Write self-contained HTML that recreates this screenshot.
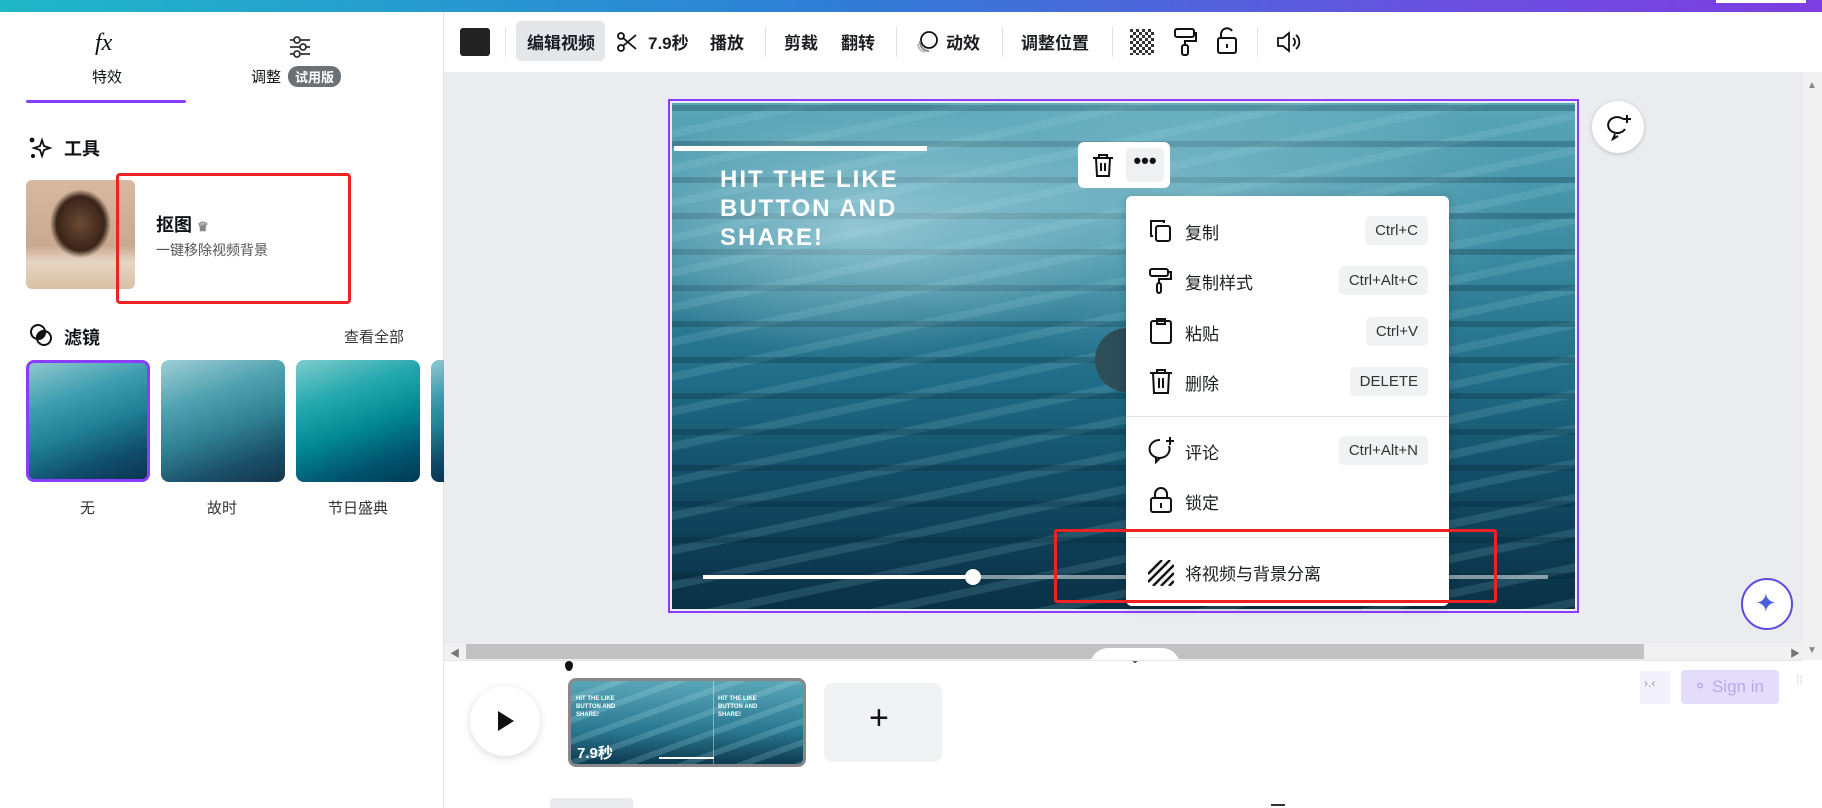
<!DOCTYPE html>
<html><head><meta charset="utf-8"><style>
*{margin:0;padding:0;box-sizing:border-box}
body{width:1822px;height:808px;overflow:hidden;background:#fff;font-family:"Liberation Sans","Noto Sans CJK SC",sans-serif;color:#0d1216;position:relative}
.a{position:absolute}
.tb{font-size:17px;font-weight:bold;color:#1a1d21;top:29px}
.sep{position:absolute;top:27px;width:1px;height:30px;background:#e0e2e6}
.mi{position:absolute;left:1185px;font-size:17px;color:#1a1d21}
.kb{position:absolute;right:394px;font-size:15px;color:#333;background:#f1f2f4;border-radius:5px;padding:6px 10px}
.ic{position:absolute;left:1148px}
.th{position:absolute;top:360px;width:124px;height:122px;border-radius:8px;background:linear-gradient(160deg,#8fc7cf 0%,#3f9fb0 30%,#1f7f94 55%,#0f4d6b 80%,#0b3550 100%)}
</style></head><body>
<div class="a" style="left:0;top:0;width:1822px;height:12px;background:linear-gradient(90deg,#1fb8c8,#2e7fd6 45%,#6a4fe0 80%,#7d3de0)"></div>
<div class="a" style="left:1716px;top:0;width:90px;height:3px;background:#fff"></div>
<div class="a" style="left:443px;top:12px;width:1px;height:796px;background:#e3e5e8"></div>
<div class="a" style="left:95px;top:30px;font-size:24px;font-style:italic;font-family:'Liberation Serif',serif">fx</div>
<div class="a" style="left:92px;top:66px;font-size:15px">特效</div>
<div class="a" style="left:26px;top:100px;width:160px;height:3px;background:#8b3dff;border-radius:2px"></div>
<svg class="a" style="left:287px;top:34px" width="26" height="26" viewBox="0 0 26 26" fill="none" stroke="#333" stroke-width="1.8"><path d="M3 6h20M3 13h20M3 20h20"/><circle cx="10" cy="6" r="3" fill="#fff"/><circle cx="16" cy="13" r="3" fill="#fff"/><circle cx="10" cy="20" r="3" fill="#fff"/></svg>
<div class="a" style="left:251px;top:66px;font-size:15px">调整</div>
<div class="a" style="left:288px;top:66px;font-size:13px;font-weight:bold;color:#fff;background:#6b6f76;border-radius:10px;padding:1px 7px">试用版</div>
<svg class="a" style="left:28px;top:136px" width="24" height="24" viewBox="0 0 24 24" fill="none" stroke="#111" stroke-width="1.8"><path d="M14 4l2 6 6 2-6 2-2 6-2-6-6-2 6-2z"/><circle cx="4" cy="4" r="1.5" fill="#111"/><circle cx="5" cy="20" r="1.2" fill="#111"/></svg>
<div class="a" style="left:64px;top:135px;font-size:18px;font-weight:bold">工具</div>
<div class="a" style="left:26px;top:180px;width:109px;height:109px;border-radius:6px;background:radial-gradient(ellipse 40% 45% at 50% 40%,#6b4a35 0,#3a2418 55%,transparent 70%),linear-gradient(180deg,#d8b9a0,#c9a98e 60%,#e6d6c4 75%,#d7c0a5)"></div>
<div class="a" style="left:116px;top:173px;width:235px;height:131px;border:3px solid #ee2222;border-radius:4px"></div>
<div class="a" style="left:156px;top:211px;font-size:18px;font-weight:bold">抠图 <span style="font-size:13px;color:#888">♛</span></div>
<div class="a" style="left:156px;top:240px;font-size:14px;color:#555">一键移除视频背景</div>
<svg class="a" style="left:28px;top:322px" width="26" height="26" viewBox="0 0 26 26" fill="none" stroke="#111" stroke-width="2"><circle cx="10" cy="10" r="7"/><circle cx="16" cy="16" r="7"/><path d="M9 17a7 7 0 0 1 8-8 7 7 0 0 1-8 8z" fill="#111"/></svg>
<div class="a" style="left:64px;top:324px;font-size:18px;font-weight:bold">滤镜</div>
<div class="a" style="left:344px;top:326px;font-size:15px;color:#333">查看全部</div>
<div class="th" style="left:26px;border:3px solid #8b3dff"></div>
<div class="th" style="left:161px;filter:saturate(.8) brightness(1.05)"></div>
<div class="th" style="left:296px;filter:saturate(1.3) hue-rotate(-8deg)"></div>
<div class="th" style="left:431px;width:13px;border-radius:8px 0 0 8px"></div>
<div class="a" style="left:80px;top:497px;font-size:15px;color:#333">无</div>
<div class="a" style="left:207px;top:497px;font-size:15px;color:#333">故时</div>
<div class="a" style="left:328px;top:497px;font-size:15px;color:#333">节日盛典</div>
<div class="a" style="left:460px;top:28px;width:30px;height:28px;background:#222;border-radius:3px"></div>
<div class="sep" style="left:505px"></div>
<div class="a" style="left:516px;top:21px;width:89px;height:40px;background:#e4e6ea;border-radius:5px"></div>
<div class="a tb" style="left:527px">编辑视频</div>
<svg class="a" style="left:615px;top:30px" width="24" height="24" viewBox="0 0 24 24" fill="none" stroke="#111" stroke-width="1.8"><circle cx="6" cy="6" r="3"/><circle cx="6" cy="18" r="3"/><path d="M8 8l13 11M8 16L21 5"/></svg>
<div class="a tb" style="left:648px">7.9秒</div>
<div class="a tb" style="left:710px">播放</div>
<div class="sep" style="left:765px"></div>
<div class="a tb" style="left:784px">剪裁</div>
<div class="a tb" style="left:841px">翻转</div>
<div class="sep" style="left:896px"></div>
<svg class="a" style="left:914px;top:29px" width="26" height="26" viewBox="0 0 26 26" fill="none" stroke="#111" stroke-width="1.8"><circle cx="15" cy="11" r="8"/><path d="M6 12a9 9 0 0 0 9 10" stroke="#888"/><path d="M4 15a8 8 0 0 0 7 8" stroke="#bbb"/></svg>
<div class="a tb" style="left:946px">动效</div>
<div class="sep" style="left:1002px"></div>
<div class="a tb" style="left:1021px">调整位置</div>
<div class="sep" style="left:1112px"></div>
<svg class="a" style="left:1130px;top:29px" width="24" height="26"><defs><pattern id="ck" width="6" height="6" patternUnits="userSpaceOnUse"><rect width="3" height="3" fill="#333"/><rect x="3" y="3" width="3" height="3" fill="#333"/></pattern></defs><rect width="24" height="26" fill="url(#ck)"/></svg>
<svg class="a" style="left:1172px;top:27px" width="26" height="30" viewBox="0 0 26 30" fill="none" stroke="#111" stroke-width="2"><rect x="3" y="2" width="19" height="8" rx="2"/><path d="M22 6h2v8H13v4"/><rect x="10" y="18" width="6" height="10" rx="2"/></svg>
<svg class="a" style="left:1215px;top:26px" width="24" height="30" viewBox="0 0 24 30" fill="none" stroke="#111" stroke-width="2"><path d="M6 12V8a6 6 0 0 1 11-3"/><rect x="3" y="12" width="18" height="15" rx="2"/><path d="M12 18v4"/></svg>
<div class="sep" style="left:1257px"></div>
<svg class="a" style="left:1275px;top:29px" width="26" height="26" viewBox="0 0 26 26" fill="none" stroke="#111" stroke-width="1.8"><path d="M3 9h5l6-5v18l-6-5H3z"/><path d="M18 9a5 5 0 0 1 0 8M21 6a9 9 0 0 1 0 14"/></svg>
<div class="a" style="left:444px;top:72px;width:1359px;height:571px;background:#ebecf0"></div>
<div class="a" style="left:1803px;top:72px;width:19px;height:588px;background:#f1f1f1"></div>
<div class="a" style="left:1807px;top:80px;font-size:10px;color:#888">▲</div>
<div class="a" style="left:1807px;top:645px;font-size:10px;color:#888">▼</div>
<div class="a" style="left:668px;top:99px;width:911px;height:514px;border:2px solid #8b3dff"></div>
<div class="a" style="left:672px;top:103px;width:903px;height:506px;overflow:hidden;background:
radial-gradient(ellipse 30% 25% at 20% 25%,rgba(210,240,245,.55),transparent),
radial-gradient(ellipse 40% 30% at 55% 20%,rgba(180,225,235,.45),transparent),
repeating-linear-gradient(0deg,rgba(0,30,45,0) 0 30px,rgba(0,30,45,.25) 30px 36px),
repeating-linear-gradient(168deg,rgba(255,255,255,0) 0 26px,rgba(160,220,230,.15) 26px 34px),
linear-gradient(180deg,#5aa6b8 0%,#3a8aa0 30%,#206c86 55%,#124c65 75%,#0a3045 100%)">
<div class="a" style="left:2px;top:43px;width:253px;height:5px;background:#fff"></div>
<div class="a" style="left:48px;top:62px;font-size:24px;font-weight:bold;color:#fff;letter-spacing:2px;line-height:29px">HIT THE LIKE<br>BUTTON AND<br>SHARE!</div>
<div class="a" style="left:423px;top:225px;width:64px;height:64px;border-radius:50%;background:#2d4d58"></div>
<div class="a" style="left:31px;top:472px;width:845px;height:4px;background:rgba(255,255,255,.5)"></div>
<div class="a" style="left:31px;top:472px;width:270px;height:4px;background:#fff"></div>
<div class="a" style="left:293px;top:466px;width:16px;height:16px;border-radius:50%;background:#fff"></div>
</div>
<div class="a" style="left:1078px;top:142px;width:92px;height:46px;background:#fff;border-radius:6px"></div>
<svg class="a" style="left:1091px;top:152px" width="24" height="26" viewBox="0 0 24 26" fill="none" stroke="#111" stroke-width="2"><path d="M2 6h20M8 6V3h8v3M5 6l1 18h12l1-18M10 11v8M14 11v8"/></svg>
<div class="a" style="left:1126px;top:148px;width:38px;height:34px;background:#eef0f2;border-radius:4px;font-size:22px;font-weight:bold;text-align:center;line-height:26px">•••</div>
<div class="a" style="left:1592px;top:101px;width:52px;height:52px;border-radius:50%;background:#fff;box-shadow:0 1px 4px rgba(0,0,0,.2)"></div>
<svg class="a" style="left:1605px;top:113px" width="28" height="28" viewBox="0 0 28 28" fill="none" stroke="#111" stroke-width="2"><path d="M18 6a9 8 0 1 0 2 10"/><path d="M10 21l-2 5 5-3"/><path d="M22 2v8M18 6h8"/></svg>
<div class="a" style="left:1741px;top:578px;width:52px;height:52px;border-radius:50%;background:#fff;border:2px solid #5a4ae0"></div>
<div class="a" style="left:1755px;top:588px;font-size:26px;color:#4a5be0">✦</div>
<div class="a" style="left:1126px;top:196px;width:323px;height:410px;background:#fff;border-radius:6px;box-shadow:0 2px 10px rgba(0,0,0,.2)"></div>
<div class="a" style="left:1126px;top:416px;width:323px;height:1px;background:#dfe1e5"></div>
<div class="a" style="left:1126px;top:537px;width:323px;height:1px;background:#dfe1e5"></div>
<svg class="ic" style="top:218px" width="26" height="26" viewBox="0 0 26 26" fill="none" stroke="#111" stroke-width="2"><path d="M5 18H3V3h13v2"/><rect x="8" y="8" width="14" height="15" rx="2"/></svg>
<div class="mi" style="top:219px">复制</div><div class="kb" style="top:216px">Ctrl+C</div>
<svg class="ic" style="top:267px" width="26" height="28" viewBox="0 0 26 28" fill="none" stroke="#111" stroke-width="2"><rect x="2" y="2" width="18" height="7" rx="2"/><path d="M20 5h3v7H11v4"/><rect x="9" y="16" width="4" height="10" rx="2"/></svg>
<div class="mi" style="top:269px">复制样式</div><div class="kb" style="top:266px">Ctrl+Alt+C</div>
<svg class="ic" style="top:317px" width="26" height="28" viewBox="0 0 26 28" fill="none" stroke="#111" stroke-width="2"><rect x="3" y="4" width="20" height="22" rx="2"/><path d="M9 2h8v5H9z"/></svg>
<div class="mi" style="top:320px">粘贴</div><div class="kb" style="top:317px">Ctrl+V</div>
<svg class="ic" style="top:367px" width="26" height="28" viewBox="0 0 26 28" fill="none" stroke="#111" stroke-width="2"><path d="M2 6h22M9 6V3h8v3M5 6l1 20h14l1-20M11 11v10M15 11v10"/></svg>
<div class="mi" style="top:370px">删除</div><div class="kb" style="top:367px">DELETE</div>
<svg class="ic" style="top:436px" width="28" height="28" viewBox="0 0 28 28" fill="none" stroke="#111" stroke-width="2"><path d="M21 10a10 9 0 1 1-9-6"/><path d="M12 22l-4 4v-5"/><path d="M22 1v8M18 5h8"/></svg>
<div class="mi" style="top:439px">评论</div><div class="kb" style="top:436px">Ctrl+Alt+N</div>
<svg class="ic" style="top:486px" width="26" height="28" viewBox="0 0 26 28" fill="none" stroke="#111" stroke-width="2"><path d="M7 12V8a6 6 0 0 1 12 0v4"/><rect x="3" y="12" width="20" height="14" rx="2"/><path d="M13 17v5"/></svg>
<div class="mi" style="top:489px">锁定</div>
<svg class="ic" style="top:560px" width="26" height="26" viewBox="0 0 26 26" stroke="#111" stroke-width="2.5"><path d="M0 14L14 0M0 22L22 0M5 26L26 5M13 26L26 13M21 26l5-5"/></svg>
<div class="mi" style="top:560px">将视频与背景分离</div>
<div class="a" style="left:1054px;top:529px;width:443px;height:74px;border:3px solid #ee2222;border-radius:3px"></div>
<div class="a" style="left:444px;top:643px;width:1359px;height:17px;background:#f1f1f1"></div>
<div class="a" style="left:466px;top:644px;width:1178px;height:15px;background:#c1c1c1"></div>
<div class="a" style="left:450px;top:645px;font-size:10px;color:#777">◀</div>
<div class="a" style="left:1790px;top:645px;font-size:10px;color:#777">▶</div>
<div class="a" style="left:1090px;top:648px;width:90px;height:24px;background:#fff;border-radius:18px 18px 0 0"></div>
<div class="a" style="left:1130px;top:652px;font-size:12px">⌄</div>
<div class="a" style="left:444px;top:660px;width:1359px;height:1px;background:#e3e5e8"></div>
<div class="a" style="left:470px;top:686px;width:70px;height:70px;border-radius:50%;background:#fff;box-shadow:0 2px 8px rgba(0,0,0,.15)"></div>
<svg class="a" style="left:496px;top:710px" width="20" height="22"><path d="M2 1l16 10L2 21z" fill="#111"/></svg>
<div class="a" style="left:565px;top:661px;width:8px;height:10px;background:#111;border-radius:50% 50% 50% 50%/40% 40% 60% 60%"></div>
<div class="a" style="left:568px;top:678px;width:238px;height:89px;border:3px solid #888;border-radius:8px;overflow:hidden;background:
repeating-linear-gradient(160deg,rgba(255,255,255,0) 0 14px,rgba(180,230,240,.2) 14px 20px),
linear-gradient(180deg,#5aa6b8,#2a7890 60%,#0d3a50)">
<div class="a" style="left:142px;top:0;width:1px;height:89px;background:rgba(255,255,255,.4)"></div>
<div class="a" style="left:5px;top:14px;font-size:6px;color:#fff;font-weight:bold;line-height:8px">HIT THE LIKE<br>BUTTON AND<br>SHARE!</div>
<div class="a" style="left:147px;top:14px;font-size:6px;color:#fff;font-weight:bold;line-height:8px">HIT THE LIKE<br>BUTTON AND<br>SHARE!</div>
<div class="a" style="left:6px;top:61px;font-size:15px;color:#fff;font-weight:bold">7.9秒</div>
<div class="a" style="left:88px;top:76px;width:55px;height:2px;background:#fff"></div>
</div>
<div class="a" style="left:824px;top:683px;width:118px;height:79px;background:#f1f2f4;border-radius:8px"></div>
<div class="a" style="left:869px;top:699px;font-size:34px;font-weight:200;color:#111">+</div>
<div class="a" style="left:1640px;top:671px;width:30px;height:33px;background:#f3f1fb"></div>
<div class="a" style="left:1644px;top:676px;font-size:12px;color:#999">›.‹</div>
<div class="a" style="left:1681px;top:670px;width:98px;height:34px;background:#e4dcfb;border-radius:4px;color:#b8a8f0;font-size:17px;line-height:34px;padding-left:12px">&#9900; Sign in</div>
<div class="a" style="left:1796px;top:676px;font-size:12px;color:#ccc;line-height:8px">⁞⁞</div>
<div class="a" style="left:550px;top:798px;width:83px;height:10px;background:#e9eaed;border-radius:4px 4px 0 0"></div>
<div class="a" style="left:1271px;top:804px;width:14px;height:2px;background:#333"></div>
</body></html>
